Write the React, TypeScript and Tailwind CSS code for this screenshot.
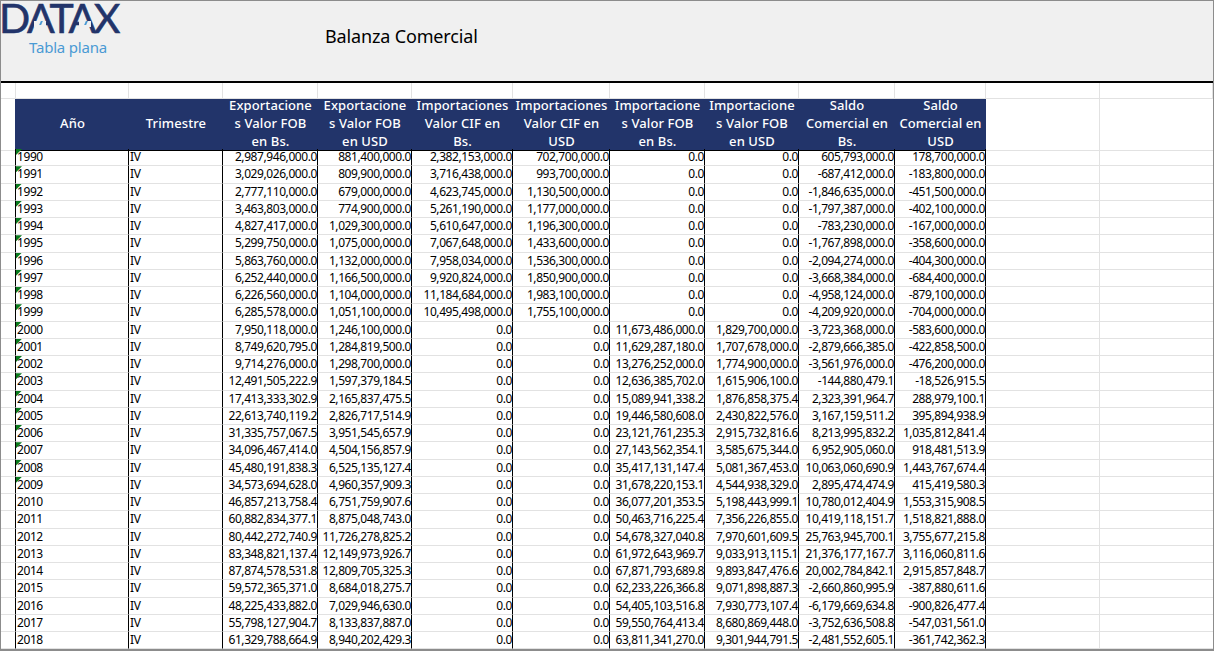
const cols = 'grid grid-cols-[15px_113px_94px_95px_94px_101px_97px_95px_94px_96px_91px_114px_113px]'
const font = { fontFamily: '"Noto Sans", sans-serif' }

const headers = [
  ['Exportacione', 's Valor FOB', 'en Bs.'],
  ['Exportacione', 's Valor FOB', 'en USD'],
  ['Importaciones', 'Valor CIF en', 'Bs.'],
  ['Importaciones', 'Valor CIF en', 'USD'],
  ['Importacione', 's Valor FOB', 'en Bs.'],
  ['Importacione', 's Valor FOB', 'en USD'],
  ['Saldo', 'Comercial en', 'Bs.'],
  ['Saldo', 'Comercial en', 'USD'],
]

const rows = [
  ['1990', '2,987,946,000.0', '881,400,000.0', '2,382,153,000.0', '702,700,000.0', '0.0', '0.0', '605,793,000.0', '178,700,000.0'],
  ['1991', '3,029,026,000.0', '809,900,000.0', '3,716,438,000.0', '993,700,000.0', '0.0', '0.0', '-687,412,000.0', '-183,800,000.0'],
  ['1992', '2,777,110,000.0', '679,000,000.0', '4,623,745,000.0', '1,130,500,000.0', '0.0', '0.0', '-1,846,635,000.0', '-451,500,000.0'],
  ['1993', '3,463,803,000.0', '774,900,000.0', '5,261,190,000.0', '1,177,000,000.0', '0.0', '0.0', '-1,797,387,000.0', '-402,100,000.0'],
  ['1994', '4,827,417,000.0', '1,029,300,000.0', '5,610,647,000.0', '1,196,300,000.0', '0.0', '0.0', '-783,230,000.0', '-167,000,000.0'],
  ['1995', '5,299,750,000.0', '1,075,000,000.0', '7,067,648,000.0', '1,433,600,000.0', '0.0', '0.0', '-1,767,898,000.0', '-358,600,000.0'],
  ['1996', '5,863,760,000.0', '1,132,000,000.0', '7,958,034,000.0', '1,536,300,000.0', '0.0', '0.0', '-2,094,274,000.0', '-404,300,000.0'],
  ['1997', '6,252,440,000.0', '1,166,500,000.0', '9,920,824,000.0', '1,850,900,000.0', '0.0', '0.0', '-3,668,384,000.0', '-684,400,000.0'],
  ['1998', '6,226,560,000.0', '1,104,000,000.0', '11,184,684,000.0', '1,983,100,000.0', '0.0', '0.0', '-4,958,124,000.0', '-879,100,000.0'],
  ['1999', '6,285,578,000.0', '1,051,100,000.0', '10,495,498,000.0', '1,755,100,000.0', '0.0', '0.0', '-4,209,920,000.0', '-704,000,000.0'],
  ['2000', '7,950,118,000.0', '1,246,100,000.0', '0.0', '0.0', '11,673,486,000.0', '1,829,700,000.0', '-3,723,368,000.0', '-583,600,000.0'],
  ['2001', '8,749,620,795.0', '1,284,819,500.0', '0.0', '0.0', '11,629,287,180.0', '1,707,678,000.0', '-2,879,666,385.0', '-422,858,500.0'],
  ['2002', '9,714,276,000.0', '1,298,700,000.0', '0.0', '0.0', '13,276,252,000.0', '1,774,900,000.0', '-3,561,976,000.0', '-476,200,000.0'],
  ['2003', '12,491,505,222.9', '1,597,379,184.5', '0.0', '0.0', '12,636,385,702.0', '1,615,906,100.0', '-144,880,479.1', '-18,526,915.5'],
  ['2004', '17,413,333,302.9', '2,165,837,475.5', '0.0', '0.0', '15,089,941,338.2', '1,876,858,375.4', '2,323,391,964.7', '288,979,100.1'],
  ['2005', '22,613,740,119.2', '2,826,717,514.9', '0.0', '0.0', '19,446,580,608.0', '2,430,822,576.0', '3,167,159,511.2', '395,894,938.9'],
  ['2006', '31,335,757,067.5', '3,951,545,657.9', '0.0', '0.0', '23,121,761,235.3', '2,915,732,816.6', '8,213,995,832.2', '1,035,812,841.4'],
  ['2007', '34,096,467,414.0', '4,504,156,857.9', '0.0', '0.0', '27,143,562,354.1', '3,585,675,344.0', '6,952,905,060.0', '918,481,513.9'],
  ['2008', '45,480,191,838.3', '6,525,135,127.4', '0.0', '0.0', '35,417,131,147.4', '5,081,367,453.0', '10,063,060,690.9', '1,443,767,674.4'],
  ['2009', '34,573,694,628.0', '4,960,357,909.3', '0.0', '0.0', '31,678,220,153.1', '4,544,938,329.0', '2,895,474,474.9', '415,419,580.3'],
  ['2010', '46,857,213,758.4', '6,751,759,907.6', '0.0', '0.0', '36,077,201,353.5', '5,198,443,999.1', '10,780,012,404.9', '1,553,315,908.5'],
  ['2011', '60,882,834,377.1', '8,875,048,743.0', '0.0', '0.0', '50,463,716,225.4', '7,356,226,855.0', '10,419,118,151.7', '1,518,821,888.0'],
  ['2012', '80,442,272,740.9', '11,726,278,825.2', '0.0', '0.0', '54,678,327,040.8', '7,970,601,609.5', '25,763,945,700.1', '3,755,677,215.8'],
  ['2013', '83,348,821,137.4', '12,149,973,926.7', '0.0', '0.0', '61,972,643,969.7', '9,033,913,115.1', '21,376,177,167.7', '3,116,060,811.6'],
  ['2014', '87,874,578,531.8', '12,809,705,325.3', '0.0', '0.0', '67,871,793,689.8', '9,893,847,476.6', '20,002,784,842.1', '2,915,857,848.7'],
  ['2015', '59,572,365,371.0', '8,684,018,275.7', '0.0', '0.0', '62,233,226,366.8', '9,071,898,887.3', '-2,660,860,995.9', '-387,880,611.6'],
  ['2016', '48,225,433,882.0', '7,029,946,630.0', '0.0', '0.0', '54,405,103,516.8', '7,930,773,107.4', '-6,179,669,634.8', '-900,826,477.4'],
  ['2017', '55,798,127,904.7', '8,133,837,887.0', '0.0', '0.0', '59,550,764,413.4', '8,680,869,448.0', '-3,752,636,508.8', '-547,031,561.0'],
  ['2018', '61,329,788,664.9', '8,940,202,429.3', '0.0', '0.0', '63,811,341,270.0', '9,301,944,791.5', '-2,481,552,605.1', '-361,742,362.3'],
]

function Logo() {
  return (
    <div className="relative w-[130px] shrink-0">
      <div
        className="relative -ml-[2px] h-[34px] text-[41px] leading-[34px] tracking-[-2.4px] text-[#22346a] whitespace-nowrap [-webkit-text-stroke:0.6px_#22346a]"
        style={{ fontFamily: 'Lato, sans-serif' }}
      >
        DATAX
        {/* the logo's A has no crossbar, only a small blue tick */}
        <span className="absolute left-[35px] top-[20px] h-[6px] w-[12px] bg-[#f0f0f0]" />
        <span className="absolute left-[80px] top-[20px] h-[6px] w-[12px] bg-[#f0f0f0]" />
        <span className="absolute left-[41px] top-[20px] h-[4px] w-[2px] -skew-x-[24deg] bg-[#4a9ad4]" />
        <span className="absolute left-[86px] top-[20px] h-[4px] w-[2px] -skew-x-[24deg] bg-[#4a9ad4]" />
      </div>
      <div className="mt-[2px] pl-[28px] text-[15px] leading-[20px] tracking-[-0.2px] text-[#4a9ad4]" style={font}>
        Tabla plana
      </div>
    </div>
  )
}

function BlankRow() {
  return (
    <div className={`${cols} h-[16px]`}>
      {Array.from({ length: 13 }).map((_, i) => (
        <div key={i} className="border-r border-b border-[#e2e2e2]" />
      ))}
    </div>
  )
}

function HeaderRow() {
  return (
    <div className={`${cols} h-[50px]`}>
      <div className="border-r border-b border-r-[#22346a] border-b-[#e2e2e2]" />
      <div className="col-span-10 grid grid-cols-[113px_94px_95px_94px_101px_97px_95px_94px_96px_91px] border-b border-black bg-[#22346a] text-center text-[13px] font-medium leading-[18px] tracking-[0.1px] text-white">
        <div className="flex items-center justify-center pb-[4px]">Año</div>
        <div className="flex items-center justify-center pb-[4px]">Trimestre</div>
        {headers.map((lines, i) => (
          <div key={i} className="-mx-[3px] -mt-[3px] whitespace-nowrap">
            {lines.map((l) => (
              <div key={l}>{l}</div>
            ))}
          </div>
        ))}
      </div>
      <div className="border-r border-b border-[#e2e2e2]" />
      <div className="border-b border-[#e2e2e2]" />
    </div>
  )
}

function DataRow({ row }: { row: string[] }) {
  const [year, ...values] = row
  const flagged = Number(year) < 2010
  return (
    <div className={`${cols} h-[17.25px] text-[12px] leading-[15px] tracking-[-0.42px] text-black`}>
      <div className="border-r border-b border-r-black border-b-[#e2e2e2]" />
      <div className="relative overflow-hidden border-r border-b border-r-black border-b-[#e2e2e2] pl-[1px]">
        {flagged && (
          <span className="absolute left-0 top-0 h-[6px] w-[6px] bg-[#0a7a1e] [clip-path:polygon(0_0,100%_0,0_100%)]" />
        )}
        {year}
      </div>
      <div className="overflow-hidden border-r border-b border-r-black border-b-[#e2e2e2] pl-[1px]">IV</div>
      {values.map((v, i) => (
        <div
          key={i}
          className="overflow-hidden whitespace-nowrap border-r border-b border-r-black border-b-[#e2e2e2] text-right"
        >
          {v}
        </div>
      ))}
      <div className="border-r border-b border-[#e2e2e2]" />
      <div className="border-b border-[#e2e2e2]" />
    </div>
  )
}

export default function App() {
  return (
    <div
      className="h-[651px] w-[1214px] overflow-hidden border-x border-t border-b-2 border-[#8c8c8c] bg-white"
      style={font}
    >
      <div className="flex h-[82px] border-b-2 border-black bg-[#f0f0f0]">
        <Logo />
        <div className="ml-[194px] mt-[23px] text-[18px] leading-[24px] tracking-[-0.15px] text-black">
          Balanza Comercial
        </div>
      </div>
      <BlankRow />
      <HeaderRow />
      {rows.map((r) => (
        <DataRow key={r[0]} row={r} />
      ))}
    </div>
  )
}
